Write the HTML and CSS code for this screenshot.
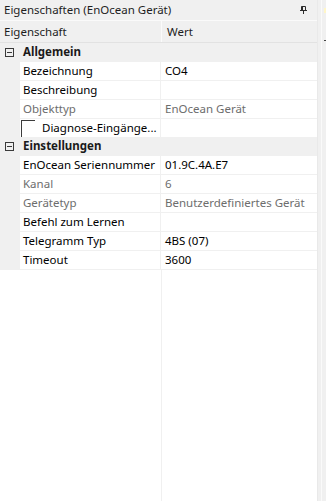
FILE: index.html
```html
<!DOCTYPE html>
<html lang="de">
<head>
<meta charset="utf-8">
<title>Eigenschaften</title>
<link rel="stylesheet" href="styles.css">
</head>
<body>
<div class="window">
  <div class="panel">
    <div class="titlebar">
      <span class="title">Eigenschaften (EnOcean Gerät)</span>
      <svg class="pin" width="7" height="8" viewBox="0 0 7 8">
        <path d="M1.5 0.5h4v4h-4z" fill="none" stroke="#2b2b2b" stroke-width="1"/>
        <path d="M1.5 0.5h1.5v4h-1.5z" fill="#2b2b2b"/>
        <path d="M0 4.5h7" stroke="#2b2b2b" stroke-width="1"/>
        <path d="M3.5 4.5v3.5" stroke="#2b2b2b" stroke-width="1"/>
      </svg>
    </div>
    <div class="header">
      <div class="hcell hname">Eigenschaft</div>
      <div class="hcell hvalue">Wert</div>
    </div>
    <div class="grid">
      <div class="cat">
        <span class="expander"></span><span class="cat-label">Allgemein</span>
      </div>
      <div class="row"><div class="gutter"></div><div class="name">Bezeichnung</div><div class="value">CO4</div></div>
      <div class="row"><div class="gutter"></div><div class="name">Beschreibung</div><div class="value"></div></div>
      <div class="row ro"><div class="gutter"></div><div class="name">Objekttyp</div><div class="value">EnOcean Gerät</div></div>
      <div class="row"><div class="gutter"></div><div class="name sub"><span class="corner"></span><span class="sub-label">Diagnose-Eingänge...</span></div><div class="value"></div></div>
      <div class="cat">
        <span class="expander"></span><span class="cat-label">Einstellungen</span>
      </div>
      <div class="row"><div class="gutter"></div><div class="name">EnOcean Seriennummer</div><div class="value">01.9C.4A.E7</div></div>
      <div class="row ro"><div class="gutter"></div><div class="name">Kanal</div><div class="value">6</div></div>
      <div class="row ro"><div class="gutter"></div><div class="name">Gerätetyp</div><div class="value">Benutzerdefiniertes Gerät</div></div>
      <div class="row"><div class="gutter"></div><div class="name">Befehl zum Lernen</div><div class="value"></div></div>
      <div class="row"><div class="gutter"></div><div class="name">Telegramm Typ</div><div class="value">4BS (07)</div></div>
      <div class="row"><div class="gutter"></div><div class="name">Timeout</div><div class="value">3600</div></div>
    </div>
    <div class="filler">
      <div class="fill-name"></div>
      <div class="fill-value"></div>
    </div>
  </div>
  <div class="strip">
    <div class="strip-inner">
      <span class="strip-mark"></span>
      <span class="strip-tick"></span>
    </div>
  </div>
</div>
</body>
</html>
```

FILE: styles.css
```css
html, body {
  margin: 0;
  padding: 0;
}
body {
  width: 326px;
  height: 501px;
  overflow: hidden;
  background: #f0f0f0;
  font-family: "Noto Sans", "Open Sans", sans-serif;
  font-size: 11.5px;
  color: #000;
}
.window {
  display: flex;
  height: 501px;
}
.panel {
  width: 317px;
  display: flex;
  flex-direction: column;
  background: #ffffff;
}
.titlebar {
  height: 20px;
  background: #f0f0f0;
  display: flex;
  align-items: center;
  justify-content: space-between;
  padding: 0 10px 0 4px;
  border-bottom: 1px solid #fafafa;
}
.title {
  color: #1e1e1e;
  line-height: 20px;
}
.pin {
  display: block;
  margin-top: -1px;
}
.header {
  height: 21px;
  display: flex;
  background: #f0f0f0;
  border-bottom: 1px solid #e2e2e2;
}
.hcell {
  line-height: 21px;
  color: #1e1e1e;
}
.hname {
  width: 157px;
  padding-left: 4px;
  border-right: 1px solid #fbfbfb;
}
.hvalue {
  padding-left: 5px;
}
.grid {
  display: flex;
  flex-direction: column;
  background: #f0f0f0;
  padding-bottom: 1px;
}
.cat {
  height: 18px;
  display: flex;
  align-items: center;
}
.expander {
  width: 7px;
  height: 7px;
  margin-left: 5px;
  margin-right: 9px;
  border: 1px solid #3a3a3a;
  position: relative;
  flex: none;
}
.expander::after {
  content: "";
  position: absolute;
  left: 1px;
  right: 1px;
  top: 3px;
  height: 1px;
  background: #3a3a3a;
}
.cat-label {
  font-weight: bold;
  line-height: 18px;
  color: #1a1a1a;
}
.row {
  display: flex;
  height: 18px;
  margin-top: 1px;
}
.gutter {
  width: 20px;
  flex: none;
}
.name {
  width: 137px;
  flex: none;
  background: #fff;
  padding-left: 3px;
  line-height: 18px;
  white-space: nowrap;
  overflow: hidden;
}
.value {
  width: 152px;
  flex: none;
  margin-left: 1px;
  background: #fff;
  padding-left: 4px;
  line-height: 18px;
  white-space: nowrap;
  overflow: hidden;
}
.ro .name,
.ro .value {
  color: #6d6d6d;
}
.name.sub {
  display: flex;
  padding-left: 1px;
  width: 139px;
}
.sub-label {
  white-space: nowrap;
}
.corner {
  width: 13px;
  height: 16px;
  margin-top: 1px;
  margin-right: 7px;
  border-top: 1px solid #3c3c3c;
  border-left: 1px solid #3c3c3c;
  flex: none;
}
.filler {
  flex: 1;
  display: flex;
  background: #fff;
}
.fill-name {
  width: 161px;
  border-right: 1px solid #f0f0f0;
}
.fill-value {
  flex: 1;
}
.strip {
  width: 9px;
  background: #f0f0f0;
  display: flex;
  border-left: 1px solid #e9e9e9;
  box-sizing: border-box;
  padding-left: 3px;
}
.strip-inner {
  flex: 1;
  border-left: 1px solid #fafafa;
  display: flex;
  flex-direction: column;
  align-items: flex-end;
}
.strip-mark {
  width: 2px;
  height: 5px;
  margin-top: 8px;
  background: #fff6c8;
}
.strip-tick {
  width: 2px;
  height: 1px;
  margin-top: 27px;
  background: #444;
}
```
